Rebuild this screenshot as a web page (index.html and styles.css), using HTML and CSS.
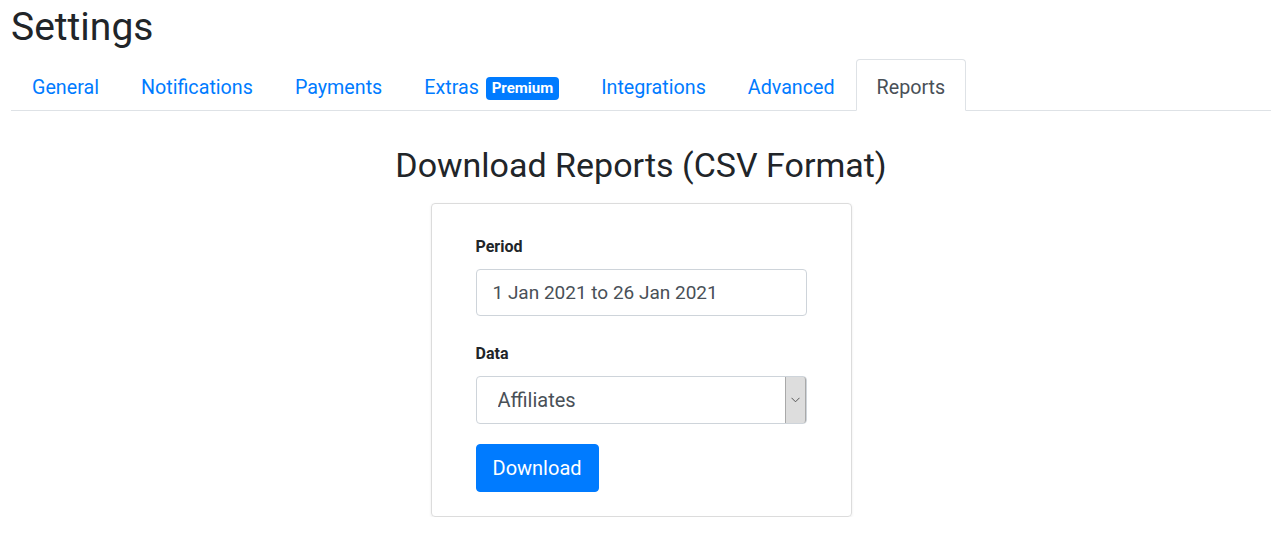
FILE: index.html
```html
<!DOCTYPE html>
<html lang="en">
<head>
<meta charset="utf-8">
<title>Settings</title>
<link rel="stylesheet" href="styles.css">
</head>
<body>
<div class="page">
  <h1 class="page-title">Settings</h1>
  <ul class="tabs">
    <li class="tab"><a href="#">General</a></li>
    <li class="tab"><a href="#">Notifications</a></li>
    <li class="tab"><a href="#">Payments</a></li>
    <li class="tab"><a href="#">Extras <span class="badge">Premium</span></a></li>
    <li class="tab"><a href="#">Integrations</a></li>
    <li class="tab"><a href="#">Advanced</a></li>
    <li class="tab active"><a href="#">Reports</a></li>
  </ul>
  <h2 class="section-title">Download Reports (CSV Format)</h2>
  <div class="card">
    <div class="form-group">
      <label class="field-label" for="period">Period</label>
      <input class="field-input" id="period" type="text" value="1 Jan 2021 to 26 Jan 2021">
    </div>
    <div class="form-group">
      <label class="field-label" for="data">Data</label>
      <div class="select-wrap">
        <select class="field-select" id="data">
          <option>Affiliates</option>
        </select>
        <span class="select-arrow">
          <svg width="9" height="6" viewBox="0 0 9 6"><polyline points="0.5,0.8 4.5,4.8 8.5,0.8" fill="none" stroke="#555" stroke-width="1"/></svg>
        </span>
      </div>
    </div>
    <button class="btn-download" type="button">Download</button>
  </div>
</div>
</body>
</html>
```

FILE: styles.css
```css
* { box-sizing: border-box; }

body {
  margin: 0;
  font-family: Roboto, "Liberation Sans", sans-serif;
  color: #212529;
  background: #fff;
}

.page {
  padding: 3px 10px 0 11px;
}

.page-title {
  font-size: 39px;
  line-height: 48px;
  font-weight: 400;
  margin: 0 0 8px;
}

.tabs {
  display: flex;
  list-style: none;
  margin: 0;
  padding: 0;
  border-bottom: 1px solid #dee2e6;
}

.tab a {
  display: block;
  padding: 13px 20px 7px;
  margin-bottom: -1px;
  border: 1px solid transparent;
  border-radius: 4px 4px 0 0;
  font-size: 19.7px;
  line-height: 30px;
  color: #007bff;
  text-decoration: none;
}

.tab.active a {
  color: #495057;
  background: #fff;
  border-color: #dee2e6 #dee2e6 #fff;
}

.badge {
  display: inline-block;
  margin-left: 2px;
  padding: 4px 6px 4px;
  font-size: 15px;
  line-height: 15px;
  font-weight: 700;
  color: #fff;
  background: #007bff;
  border-radius: 4px;
  vertical-align: 1px;
}

.section-title {
  text-align: center;
  font-size: 34px;
  line-height: 38px;
  font-weight: 400;
  margin: 35px 0 19px;
}

.card {
  width: 421px;
  margin: 0 auto;
  border: 1px solid #dcdcdc;
  border-radius: 4px;
  padding: 32px 44px 24px;
  box-shadow: 0 1px 3px rgba(0, 0, 0, 0.08);
}

.form-group + .form-group {
  margin-top: 27px;
}

.field-label {
  display: block;
  font-size: 16px;
  line-height: 22px;
  font-weight: 700;
  margin-bottom: 11px;
}

.field-input {
  display: block;
  width: 100%;
  height: 47px;
  padding: 0 16px;
  font-family: inherit;
  font-size: 19px;
  color: #495057;
  border: 1px solid #ced4da;
  border-radius: 4px;
  background: #fff;
}

.select-wrap {
  position: relative;
}

.field-select {
  display: block;
  width: 100%;
  height: 48px;
  padding: 0 21px;
  font-family: inherit;
  font-size: 20px;
  color: #495057;
  border: 1px solid #ced4da;
  border-radius: 4px;
  background: #fff;
  appearance: none;
  -webkit-appearance: none;
}

.select-arrow {
  position: absolute;
  top: 1px;
  right: 1px;
  bottom: 1px;
  width: 21px;
  display: flex;
  align-items: center;
  justify-content: center;
  background: #dddddd;
  border-left: 1px solid #a9a9a9;
  border-right: 1px solid #a9a9a9;
  border-radius: 0 3px 3px 0;
  pointer-events: none;
}

.btn-download {
  display: block;
  margin-top: 20px;
  height: 48px;
  padding: 0 16px;
  font-family: inherit;
  font-size: 20px;
  color: #fff;
  background: #007bff;
  border: 1px solid #007bff;
  border-radius: 4px;
  cursor: pointer;
}
```
